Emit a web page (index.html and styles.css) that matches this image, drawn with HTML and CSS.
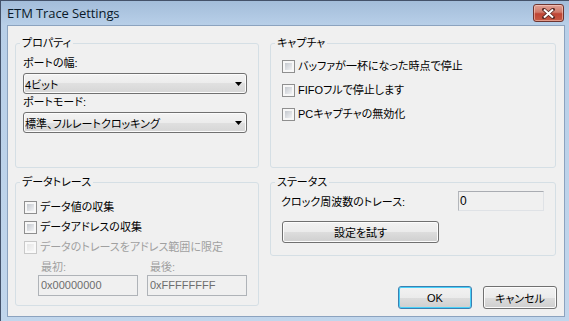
FILE: index.html
```html
<!DOCTYPE html>
<html lang="ja">
<head>
    <meta charset="UTF-8">
    <title>ETM Trace Settings</title>
    <link rel="stylesheet" href="styles.css">
</head>
<body>
    <div class="window">
        <div class="titlebar">
            <span class="title">ETM Trace Settings</span>
            <span class="close-btn">
                <svg width="13" height="11" viewBox="0 0 13 11">
                    <path d="M2 1.5 L11 9.5 M11 1.5 L2 9.5" stroke="#5a2a24" stroke-width="3.6" stroke-linecap="square"/>
                    <path d="M2 1.5 L11 9.5 M11 1.5 L2 9.5" stroke="#ffffff" stroke-width="2"/>
                </svg>
            </span>
        </div>
        <div class="client">
            <div class="layout">
                <fieldset class="group group-props">
                    <legend>プロパティ</legend>
                    <div class="props-body">
                        <div class="field-label">ポートの幅:</div>
                        <div class="combo">
                            <span>4ビット</span>
                            <svg width="7" height="4" viewBox="0 0 7 4"><path d="M0 0 H7 L3.5 4 Z" fill="#000"/></svg>
                        </div>
                        <div class="field-label">ポートモード:</div>
                        <div class="combo">
                            <span>標準、フルレートクロッキング</span>
                            <svg width="7" height="4" viewBox="0 0 7 4"><path d="M0 0 H7 L3.5 4 Z" fill="#000"/></svg>
                        </div>
                    </div>
                </fieldset>

                <fieldset class="group group-capture">
                    <legend>キャプチャ</legend>
                    <div class="capture-body">
                        <div class="check-row"><span class="checkbox"></span>バッファが一杯になった時点で停止</div>
                        <div class="check-row"><span class="checkbox"></span>FIFOフルで停止します</div>
                        <div class="check-row"><span class="checkbox"></span>PCキャプチャの無効化</div>
                    </div>
                </fieldset>

                <fieldset class="group group-trace">
                    <legend>データトレース</legend>
                    <div class="trace-body">
                        <div class="check-row"><span class="checkbox"></span>データ値の収集</div>
                        <div class="check-row"><span class="checkbox"></span>データアドレスの収集</div>
                        <div class="check-row disabled"><span class="checkbox"></span>データのトレースをアドレス範囲に限定</div>
                        <div class="range">
                            <div class="range-col">
                                <div class="field-label disabled">最初:</div>
                                <div class="edit edit-disabled">0x00000000</div>
                            </div>
                            <div class="range-col">
                                <div class="field-label disabled">最後:</div>
                                <div class="edit edit-disabled">0xFFFFFFFF</div>
                            </div>
                        </div>
                    </div>
                </fieldset>

                <div class="right-col">
                    <fieldset class="group group-status">
                        <legend>ステータス</legend>
                        <div class="status-body">
                            <div class="status-row">
                                <span>クロック周波数のトレース:</span>
                                <div class="edit edit-readonly">0</div>
                            </div>
                            <div class="button btn-test">設定を試す</div>
                        </div>
                    </fieldset>
                    <div class="dialog-buttons">
                        <div class="button btn-default">OK</div>
                        <div class="button">キャンセル</div>
                    </div>
                </div>
            </div>
        </div>
    </div>
</body>
</html>
```

FILE: styles.css
```css
* {
    box-sizing: border-box;
}

html, body {
    margin: 0;
    padding: 0;
    overflow: hidden;
}

body {
    font-family: "Liberation Sans", "Noto Sans CJK JP", sans-serif;
    font-size: 11px;
    font-feature-settings: "palt";
    color: #000;
    background: #fff;
}

.window {
    width: 572px;
    height: 324px;
    border: 1px solid #44526a;
    padding: 0 6px 6px;
    display: flex;
    flex-direction: column;
    background: linear-gradient(to bottom, #a3bdda 0px, #b8cfe8 24px, #c1d6ec 100%);
}

.titlebar {
    height: 24px;
    display: flex;
    justify-content: space-between;
    align-items: center;
}

.title {
    font-family: "Open Sans", "Liberation Sans", sans-serif;
    font-size: 13px;
    color: #0a1a2a;
    letter-spacing: -0.1px;
}

.close-btn {
    align-self: flex-start;
    margin-top: 3px;
    margin-right: 1px;
    width: 31px;
    height: 18px;
    border: 1px solid #6e3530;
    border-radius: 3px;
    display: flex;
    align-items: center;
    justify-content: center;
    background: linear-gradient(to bottom, #e0a195 0%, #d07a6a 45%, #bf4434 55%, #c65a44 100%);
    box-shadow: inset 0 0 0 1px rgba(255, 220, 210, 0.5);
}

.client {
    flex: 1;
    border: 1px solid #8ca3bf;
    background: #f0f0f0;
}

.layout {
    display: grid;
    grid-template-columns: 244px 286px;
    column-gap: 11px;
    row-gap: 7px;
    padding: 10px 0 0 7px;
    align-items: start;
}

.group {
    margin: 0;
    padding: 0;
    min-width: 0;
    border: 1px solid #d5dfe5;
    border-radius: 3px;
}

.group legend {
    padding: 0 2px;
    margin-left: 4px;
    line-height: 14px;
}

.group-props,
.group-capture {
    height: 132px;
}

.group-trace {
    height: 131px;
}

.group-status {
    height: 81px;
}

.field-label {
    line-height: 14px;
    height: 14px;
}

.disabled {
    color: #a0a0a0;
}

/* プロパティ */
.props-body {
    padding: 6px 11px 0 7px;
    display: flex;
    flex-direction: column;
}

.props-body .field-label {
    margin-bottom: 3px;
}

.props-body .combo {
    margin-bottom: 1px;
}

.combo {
    height: 21px;
    border: 1px solid #707070;
    border-radius: 3px;
    padding: 0 4px 0 1px;
    display: flex;
    align-items: center;
    justify-content: space-between;
    background: linear-gradient(to bottom, #f3f3f3 0%, #ececec 50%, #e0e0e0 50%, #d6d6d6 100%);
    box-shadow: inset 0 0 0 1px #fbfbfb;
}

/* チェックボックス */
.check-row {
    height: 14px;
    line-height: 14px;
    display: flex;
    align-items: center;
    gap: 3px;
    white-space: nowrap;
}

.checkbox {
    width: 13px;
    height: 13px;
    flex: none;
    border: 1px solid #8f8f8f;
    padding: 2px;
    background: linear-gradient(135deg, #c4c8ce, #f2f3f5) content-box, linear-gradient(#f7f7f7, #f7f7f7) border-box;
}

.check-row.disabled .checkbox {
    border-color: #c9c9c9;
    background: linear-gradient(135deg, #e6e6e6, #f6f6f6) content-box, linear-gradient(#f9f9f9, #f9f9f9) border-box;
}

.capture-body {
    padding: 9px 0 0 11px;
    display: flex;
    flex-direction: column;
    gap: 10px;
}

.trace-body {
    padding: 11px 0 0 8px;
    display: flex;
    flex-direction: column;
    gap: 6px;
}

.range {
    display: flex;
    gap: 9px;
    margin-left: 14px;
}

.range-col .field-label {
    padding-left: 3px;
    margin-bottom: 1px;
}

.edit {
    height: 21px;
    line-height: 19px;
    padding-left: 2px;
    font-size: 11px;
}

.edit-disabled {
    width: 100px;
    border: 1px solid #afb3b8;
    background: #f0f0f0;
    color: #6d6d6d;
}

.edit-readonly {
    width: 86px;
    height: 20px;
    line-height: 18px;
    padding-left: 1px;
    border: 1px solid #dfe2e6;
    border-top-color: #a9acb2;
    border-left-color: #b3b6bb;
    font-size: 12px;
}

/* ステータス */
.status-body {
    padding: 2px 11px 0 10px;
}

.status-row {
    display: flex;
    justify-content: space-between;
    align-items: center;
}

.button {
    height: 23px;
    border: 1px solid #707070;
    border-radius: 3px;
    display: flex;
    align-items: center;
    justify-content: center;
    background: linear-gradient(to bottom, #f2f2f2 0%, #ebebeb 50%, #dddddd 50%, #cfcfcf 100%);
    box-shadow: inset 0 0 0 1px #fcfcfc;
}

.btn-test {
    width: 157px;
    height: 22px;
    margin: 10px 0 0 1px;
}

.dialog-buttons {
    display: flex;
    justify-content: flex-end;
    gap: 11px;
    margin: 30px -1px 0 0;
}

.dialog-buttons .button {
    width: 74px;
}

.btn-default {
    border-color: #3c7fb1;
    box-shadow: inset 0 0 0 1px #48d1f9;
}
```
